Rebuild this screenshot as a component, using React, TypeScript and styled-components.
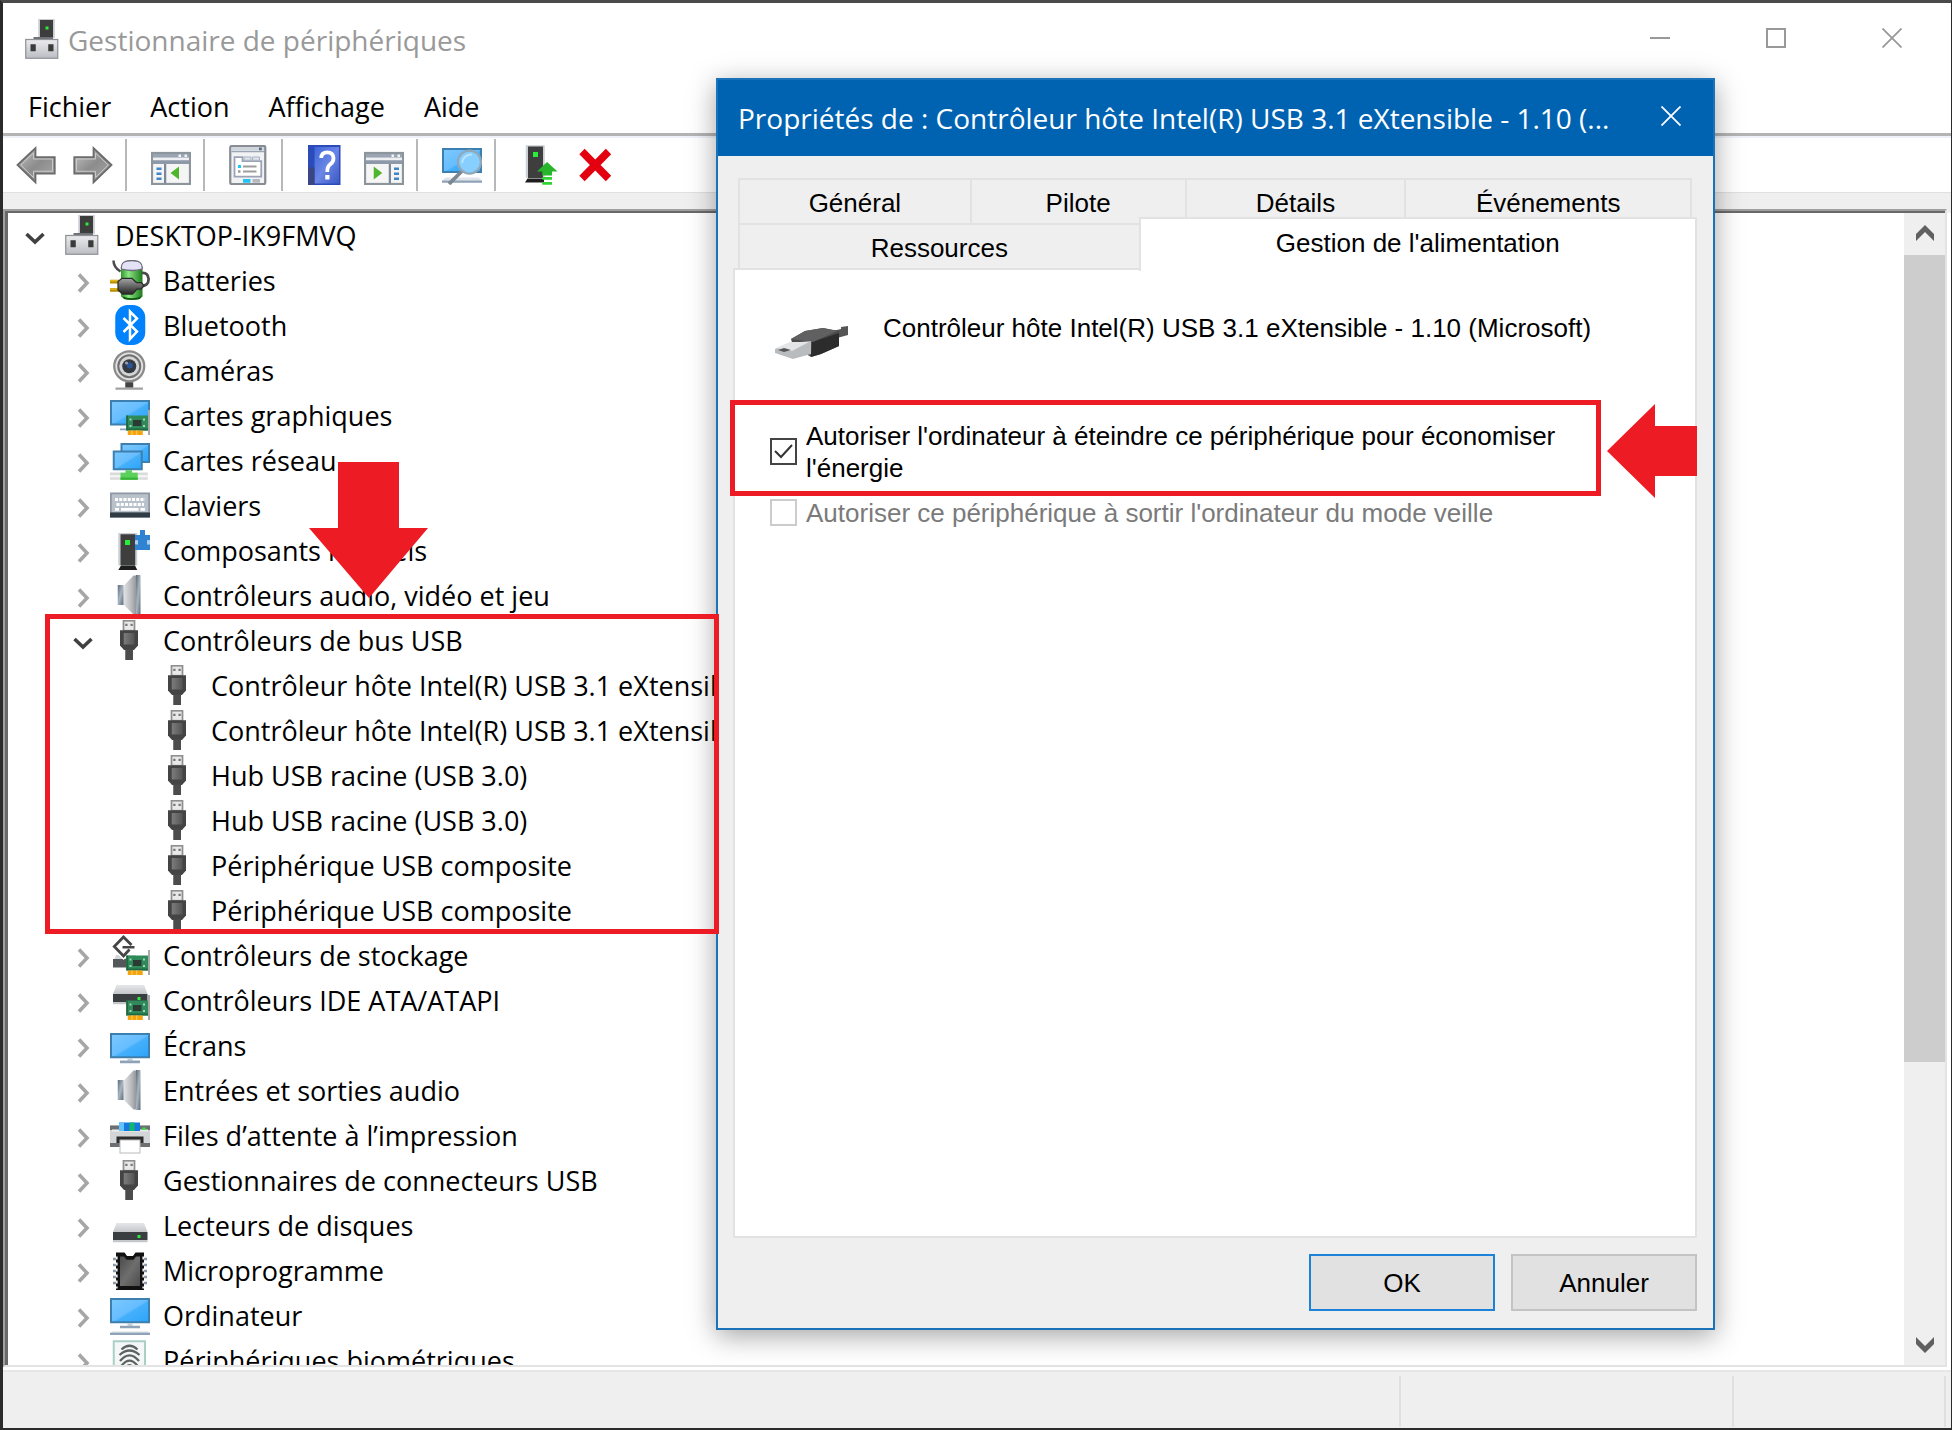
import React, { useState } from "react";
import styled, { createGlobalStyle } from "styled-components";

const uiFont = `"Open Sans", "Noto Sans", sans-serif`;
const dialogFont = `"Liberation Sans", Arial, sans-serif`;
const red = "#ed1c24";

const GlobalStyle = createGlobalStyle`
  *, *::before, *::after { box-sizing: border-box; }
  body { margin: 0; background: #2b2b2b; }
  button { border: 0; padding: 0; margin: 0; background: none; color: inherit; font: inherit; }
  ul { list-style: none; margin: 0; padding: 0; }
  svg { display: block; }
`;

/* ---------- icons (16 x 16 grid) ---------- */

const IconSvg = styled.svg`
  flex: none;
  width: 40px;
  height: 40px;
`;

const Defs = styled.svg`
  position: absolute;
  width: 0;
  height: 0;
`;

const Svg = ({ children }: { children: React.ReactNode }) => (
  <IconSvg viewBox="0 0 16 16" aria-hidden="true">
    {children}
  </IconSvg>
);

const Gradients = () => (
  <Defs aria-hidden="true">
    <defs>
      <linearGradient id="screen" x1="0" y1="0" x2="1" y2="1">
        <stop offset="0" stopColor="#7cc9ff" />
        <stop offset=".5" stopColor="#66bdff" />
        <stop offset=".55" stopColor="#45b0fb" />
        <stop offset="1" stopColor="#2ba4fa" />
      </linearGradient>
      <linearGradient id="metal" x1="0" y1="0" x2="0" y2="1">
        <stop offset="0" stopColor="#ececef" />
        <stop offset="1" stopColor="#bcbdc3" />
      </linearGradient>
      <linearGradient id="cone" x1="0" y1="0" x2="1" y2="0">
        <stop offset="0" stopColor="#e3e4e6" />
        <stop offset=".6" stopColor="#b4b6b9" />
        <stop offset="1" stopColor="#8a8c90" />
      </linearGradient>
      <linearGradient id="steel" x1="0" y1="0" x2="1" y2="1">
        <stop offset="0" stopColor="#5d6b7a" />
        <stop offset=".5" stopColor="#a9b5c1" />
        <stop offset="1" stopColor="#5c6a78" />
      </linearGradient>
      <linearGradient id="cell" x1="0" y1="0" x2="1" y2="0">
        <stop offset="0" stopColor="#2c9a2b" />
        <stop offset=".35" stopColor="#8be583" />
        <stop offset="1" stopColor="#1d7a1c" />
      </linearGradient>
      <linearGradient id="plug" x1="0" y1="0" x2="0" y2="1">
        <stop offset="0" stopColor="#a5a5a5" />
        <stop offset="1" stopColor="#262626" />
      </linearGradient>
      <linearGradient id="arrowFill" x1="0" y1="0" x2="1" y2="1">
        <stop offset="0" stopColor="#c4c4c4" />
        <stop offset=".5" stopColor="#8c8c8c" />
        <stop offset="1" stopColor="#a9a9a9" />
      </linearGradient>
      <linearGradient id="book" x1="0" y1="0" x2="1" y2="1">
        <stop offset="0" stopColor="#3f66d8" />
        <stop offset=".5" stopColor="#6a86e6" />
        <stop offset="1" stopColor="#3c58c4" />
      </linearGradient>
      <linearGradient id="chip" x1="0" y1="0" x2="1" y2="1">
        <stop offset="0" stopColor="#4a4a4a" />
        <stop offset=".5" stopColor="#6e6e6e" />
        <stop offset="1" stopColor="#4c4c4c" />
      </linearGradient>
      <linearGradient id="drive" x1="0" y1="0" x2="0" y2="1">
        <stop offset="0" stopColor="#e6e7ea" />
        <stop offset="1" stopColor="#c3c5c9" />
      </linearGradient>
      <linearGradient id="usbTop" x1="0" y1="0" x2="1" y2="0">
        <stop offset="0" stopColor="#7c7c7c" />
        <stop offset="1" stopColor="#555" />
      </linearGradient>
    </defs>
  </Defs>
);

const RootIcon = () => (
  <Svg>
    <rect x="6.5" y="0" width="6.6" height="7.6" fill="#c9ccd0" />
    <rect x="7.2" y=".4" width="5.2" height="7" fill="#3d3d3d" />
    <rect x="9.4" y="3" width="1.2" height="1.2" fill="#2eea3c" />
    <path d="M4.6 7.2h7.8v1H4.6z" fill="#6d7175" />
    <rect x="1.5" y="8.2" width="12.8" height="7.5" fill="url(#metal)" stroke="#8f9398" strokeWidth=".5" />
    <rect x="3.4" y="10.1" width="2.1" height="2.8" fill="#3a3a3a" />
    <rect x="10.5" y="10.1" width="2.1" height="2.8" fill="#3a3a3a" />
  </Svg>
);

const BatteryIcon = () => (
  <Svg>
    <path d="M4.4 3Q4.6 0 8.6 0T13 3v11.6Q12 16 8.7 16T4.4 14.6z" fill="url(#cell)" />
    <path d="M4.6 3.6Q4 .2 8.7.2T12.8 3.6Q9 4.8 4.6 3.6z" fill="#e4e2f6" stroke="#6b6a7c" strokeWidth=".5" />
    <path d="M5 14.5q3.6 1.6 7.6 0L12 15.6q-3.4.8-6.4 0z" fill="#0f5a10" />
    <path d="M1.4.2Q1.4 3 4.2 4.6" fill="none" stroke="#4b4b4b" strokeWidth="1" />
    <path d="M11.8 10.4Q15.7 10.6 15.4 7.4 15.1 5 12.8 5.2" fill="none" stroke="#4b4b4b" strokeWidth="1.1" />
    <path d="M0 8.6h3.6M0 11.9h3.6" stroke="#b98c00" strokeWidth="1.5" />
    <path d="M0 8.3h3.6M0 11.6h3.6" stroke="#e3b81c" strokeWidth=".6" />
    <path d="M3.2 8.6L4.8 7.3h4L10.6 9h2l1 1.3-1.2 1.3h-1.6L9 13.6H5L3.2 12z" fill="url(#plug)" stroke="#2b2b2b" strokeWidth=".5" />
  </Svg>
);

const BluetoothIcon = () => (
  <Svg>
    <rect x="2.1" y="0" width="12" height="16" rx="5" fill="#0082fc" />
    <path d="M5.4 5.2l5.4 5.4-2.8 3V2.6l2.8 2.8-5.4 5.4" fill="none" stroke="#fff" strokeWidth="1" />
  </Svg>
);

const CameraIcon = () => (
  <Svg>
    <circle cx="7.7" cy="6.5" r="6" fill="#e2e2e2" stroke="#8a8a8a" strokeWidth=".9" />
    <circle cx="7.7" cy="6.5" r="4.4" fill="#d3d4d6" stroke="#6f6f6f" strokeWidth=".8" />
    <circle cx="7.7" cy="6.5" r="2.8" fill="#343a40" />
    <circle cx="7.9" cy="6.2" r="1.2" fill="#28549a" />
    <circle cx="6.6" cy="5.2" r=".6" fill="#9ba6b4" />
    <rect x="6.1" y="12.9" width="3.2" height="2.2" fill="#444" />
    <rect x="2.2" y="15" width="11" height=".9" fill="#a2a2a2" />
  </Svg>
);

const Screen = ({ x, y, w, h }: { x: number; y: number; w: number; h: number }) => (
  <rect x={x + 0.4} y={y + 0.4} width={w - 0.8} height={h - 0.8} fill="url(#screen)" stroke="#3d7fae" strokeWidth=".8" />
);

const Card = () => (
  <g>
    <rect x="15.2" y="6" width=".8" height="10" fill="#a9a9a9" />
    <rect x="6.5" y="8.2" width="8.7" height="6" fill="#2f8a5a" />
    <path d="M6.5 13.4h8.7v.8H6.5zM6.5 8.2h.7v6h-.7z" fill="#1f6a43" />
    <rect x="9.2" y="10" width="3.4" height="2.4" fill="#2b3a33" />
    <path d="M7.8 9.4h.8v.8h-.8zM13.2 9.4h.8v.8h-.8zM7.8 12h.8v.8h-.8zM13.2 12h.8v.8h-.8z" fill="#a4d3b9" />
    <rect x="7.1" y="14.2" width="6" height="1.8" fill="#f5a30f" />
    <path d="M8.8 14.2v1.8M10.7 14.2v1.8" stroke="#ffd15a" strokeWidth=".4" />
  </g>
);

const GraphicsIcon = () => (
  <Svg>
    <Screen x={0} y={2} w={16} h={10.2} />
    <rect x="4" y="13.4" width="3" height=".7" fill="#8ea3b8" />
    <Card />
  </Svg>
);

const NetworkIcon = () => (
  <Svg>
    <Screen x={4.2} y={1.2} w={11.8} h={8} />
    <Screen x={1.1} y={4.2} w={12} h={7.9} />
    <rect x="0" y="13" width="15.1" height="2.9" fill="#d9dbdb" />
    <path d="M0 14h15.1v1H0z" fill="#f2f3f3" />
    <path d="M6.2 12.1h2.6v1h2.3v2.8H4.2v-2.8h2z" fill="#5bd05a" />
    <path d="M4.2 15h6.9v.9H4.2z" fill="#36b436" />
  </Svg>
);

const KeyboardIcon = () => (
  <Svg>
    <rect x="0" y="3" width="16" height="10" fill="#8d98a3" />
    <rect x=".7" y="3.7" width="14.6" height="7.2" fill="#b9c2cb" />
    <path d="M2 5.8h12M2.6 7.8h11" stroke="#fff" strokeWidth="1.2" strokeDasharray="1.2 .5" />
    <path d="M2 9.7h1.6M4.4 9.7h7M12.2 9.7h1.8" stroke="#fff" strokeWidth="1.1" />
    <rect x="0" y="11" width="16" height="2" fill="#2f3b45" />
  </Svg>
);

const ComponentIcon = () => (
  <Svg>
    <rect x="3.3" y="1.2" width="7.6" height="13" fill="#ccd0d4" />
    <rect x="4.2" y="1.7" width="5.9" height="12.4" fill="#3e3e3e" />
    <rect x="6" y="4" width="2" height="2" fill="#28ee3a" />
    <path d="M4.4 14.2h5.6l.9 1.8H3.3z" fill="#1e1e1e" />
    <path d="M12 0h2v2h2v2.200h-1.200v1.500H16V8h-6V5.700h1.200V4.200H10V2h2z" fill="#2f83d0" />
    <path d="M10 4.200h1.200v1.500H10zM14.800 4.200H16v1.500h-1.200z" fill="#a9d0f2" />
  </Svg>
);

const SpeakerIcon = () => (
  <Svg>
    <path d="M5.4 4.4L9.4.2h1.6v15.6H9.4L5.4 11.800z" fill="url(#cone)" />
    <rect x="3.1" y="4" width="2.3" height="8" fill="url(#steel)" />
    <rect x="10.4" y="0" width="1.8" height="16" fill="url(#steel)" />
  </Svg>
);

const UsbIcon = () => (
  <Svg>
    <rect x="5.4" y=".3" width="4.4" height="4" fill="#e9e9e9" stroke="#8f8f8f" strokeWidth=".7" />
    <path d="M6.1 1.500h.9v.9h-.9zM8.200 1.500h.9v.9h-.9z" fill="#777" />
    <path d="M4 4.100h7.200v6.100L9.600 12H5.600L4 10.200z" fill="#444" />
    <path d="M5.500 5.200h4.300v4.600H5.500z" fill="url(#usbTop)" />
    <rect x="6.100" y="11.800" width="3.100" height="4.200" fill="#4c4c4c" />
  </Svg>
);

const DriveShape = ({ y }: { y: number }) => (
  <g transform={`translate(0 ${y})`}>
    <path d="M2.6 0h11L15 3.6H1.2z" fill="url(#drive)" />
    <rect x="1.2" y="3.6" width="13.8" height="3.3" fill="#3b3e40" />
    <rect x="1.2" y="6.9" width="13.8" height=".8" fill="#c4c7ca" />
    <rect x="11" y="4.8" width="1.2" height="1.2" fill="#2eea3c" />
  </g>
);

const StorageIcon = () => (
  <Svg>
    <path d="M2.400 8h8v3H1.200z" fill="#d3d5d8" />
    <rect x="1.200" y="9.600" width="6" height="3.400" fill="#55585b" />
    <path d="M8.600 4L5.400.8 1.700 4.600l3.700 3.800 2.400-2.600" fill="none" stroke="#fff" strokeWidth="2.200" />
    <path d="M8.600 4L5.400.8 1.700 4.600l3.700 3.800 2.400-2.600" fill="none" stroke="#454545" strokeWidth="1.100" />
    <path d="M5 4.900h4.800" stroke="#454545" strokeWidth="1" />
    <Card />
  </Svg>
);

const IdeIcon = () => (
  <Svg>
    <DriveShape y={2} />
    <Card />
  </Svg>
);

const DisplayIcon = () => (
  <Svg>
    <Screen x={0} y={3.2} w={16} h={10.1} />
    <rect x="7" y="13.3" width="2" height="1" fill="#c3ccd6" />
    <rect x="4" y="14.2" width="8" height="1.1" fill="#8ea3b8" />
  </Svg>
);

const PrinterIcon = () => (
  <Svg>
    <path d="M0 4.200h16v8.600H0z" fill="#d4d5d7" />
    <path d="M0 4.200h16V6H0zM0 11.200h16v1.600H0z" fill="#6d7073" />
    <path d="M.8 5.800h14.400v.8H.8z" fill="#eceded" />
    <rect x="3.600" y="3" width="8.400" height="3.400" fill="#1579e0" />
    <rect x="3.600" y="3" width="2" height="3.400" fill="#62c3ff" />
    <rect x="7.800" y="3" width="2" height="3.400" fill="#12b76a" />
    <rect x="13" y="5" width="1.200" height="1" fill="#2eea3c" />
    <rect x="2.600" y="8.600" width="10.800" height="2.600" fill="#2d2d2d" />
    <rect x="4" y="10" width="8" height="5.200" fill="#fff" stroke="#bbb" strokeWidth=".4" />
  </Svg>
);

const DiskIcon = () => (
  <Svg>
    <DriveShape y={7.2} />
  </Svg>
);

const ChipIcon = () => (
  <Svg>
    <path d="M1.2 3.6h13.6M1.2 6h13.6M1.2 8.4h13.6M1.2 10.8h13.6M1.2 13.2h13.6" stroke="#8c98aa" strokeWidth="1" />
    <path d="M2.4 1h3.4l1 1.4h2.4l1-1.4h3.4v15H2.4z" fill="#111" />
    <path d="M4 2.6h1.6l1 1.3h2.8l1-1.3H12v11.8H4z" fill="url(#chip)" />
    <path d="M2.7 2.6v12.8M13.3 2.6v12.8" stroke="#e8edf4" strokeWidth=".7" strokeDasharray="1.2 1.2" />
  </Svg>
);

const DesktopIcon = () => (
  <Svg>
    <Screen x={0} y={1.2} w={16} h={10.1} />
    <rect x="7" y="11.3" width="2" height="1" fill="#c3ccd6" />
    <rect x="4" y="12.3" width="8" height="1" fill="#8ea3b8" />
    <path d="M1 14.6h14l1 .6H0z" fill="#d5dbe2" />
    <rect x="0" y="15.1" width="16" height=".9" fill="#8ea3b8" />
  </Svg>
);

const FingerprintIcon = () => (
  <Svg>
    <rect x="1.5" y=".5" width="12.5" height="15.5" fill="#f4f7f6" stroke="#a9cfc6" strokeWidth=".8" />
    <path
      d="M4.6 3.800Q7.800.8 11 3.800M3.800 6Q7.800 2.400 11.800 6M4 8.400Q7.800 3.800 11.600 8.400M4.200 10.800Q7.800 5.600 11.400 10.800M5.600 12.400Q7.800 7.600 10 12.400"
      fill="none"
      stroke="#5c6362"
      strokeWidth=".9"
    />
  </Svg>
);

const BackIcon = () => (
  <Svg>
    <path d="M.6 8L7.8 1.2v3.6h7.7v6.6H7.8V15z" fill="url(#arrowFill)" stroke="#6b6b6b" strokeWidth=".7" />
    <path d="M1.9 8l5.1-4.8v2.4h7.6v4.9H7V13z" fill="none" stroke="#c9c9c9" strokeWidth=".4" />
  </Svg>
);

const ForwardIcon = () => (
  <Svg>
    <path d="M15.4 8L8.2 1.2v3.6H.5v6.6h7.7V15z" fill="url(#arrowFill)" stroke="#6b6b6b" strokeWidth=".7" />
    <path d="M14.1 8L9 3.2v2.4H1.4v4.9H9V13z" fill="none" stroke="#c9c9c9" strokeWidth=".4" />
  </Svg>
);

const PaneIcon = ({ right = false }: { right?: boolean }) => (
  <Svg>
    <rect x=".4" y="3.2" width="15.2" height="12.4" fill="#f5f5f5" stroke="#8c949c" strokeWidth=".9" />
    <rect x=".8" y="3.6" width="14.4" height="1.5" fill="#9aa4b2" />
    <path d="M11 3.8h1v1h-1zM13.4 3.8h1v1h-1z" fill="#f1f4f8" />
    <rect x=".8" y="5.1" width="14.4" height="1" fill="#eef0f4" />
    <rect x=".8" y="6.1" width="14.4" height="1.5" fill="#8d98a8" />
    {right ? (
      <g>
        <rect x="9.9" y="7.6" width=".9" height="7.7" fill="#7d8899" />
        <path d="M12 9.5h2M12 11.5h2M12 13.5h2" stroke="#3f86c8" strokeWidth="1" />
        <path d="M3.9 8.6v5.2L7.3 11.2z" fill="#4fb52c" />
      </g>
    ) : (
      <g>
        <rect x="5.2" y="7.6" width=".9" height="7.7" fill="#7d8899" />
        <path d="M2.2 9.5h2M2.2 11.5h2M2.2 13.5h2" stroke="#3f86c8" strokeWidth="1" />
        <path d="M11.2 8.6v5.2L7.8 11.2z" fill="#4fb52c" />
      </g>
    )}
  </Svg>
);

const PropertiesIcon = () => (
  <Svg>
    <rect x=".5" y=".4" width="14" height="15.2" rx=".6" fill="#f0f2f4" stroke="#878d93" strokeWidth=".9" />
    <rect x="1" y=".9" width="13" height="1.4" fill="#cfd5dc" />
    <rect x="12" y="1" width="1.1" height="1.1" fill="#5a6a86" />
    <rect x="1" y="2.4" width="13" height=".5" fill="#9aa5b3" />
    <path d="M2.2 4.8h3.2v1.6h7.5v6.2H2.2z" fill="#fff" stroke="#9aa2b5" strokeWidth=".7" />
    <path d="M6 4.8h2.8v1.3H6zM9.4 4.8h2.8v1.3H9.4z" fill="#dfe5ec" stroke="#a9b2c0" strokeWidth=".4" />
    <rect x="3.6" y="8" width="1.2" height="1.2" fill="#17cbf5" />
    <path d="M5.6 8.6h5.4M5.6 10.6h5.4" stroke="#9d9d9d" strokeWidth=".8" />
    <rect x="3.6" y="10.1" width="1" height="1" fill="#999" />
    <rect x="5.6" y="13.6" width="3" height="1.5" fill="#1fc4f5" />
    <rect x="9.4" y="13.6" width="3" height="1.5" fill="#b5b9bd" />
  </Svg>
);

const HelpIcon = () => (
  <Svg>
    <g transform="translate(-1.2 0)">
      <rect x="1.6" y="0" width="13" height="16" fill="#2b4bb8" />
      <rect x="4.2" y=".8" width="9.8" height="14.6" fill="url(#book)" />
      <rect x="1.6" y="9" width="2.6" height="7" fill="#3a4684" />
      <path d="M6.9 5.2Q6.9 2.900 9.300 2.900T11.800 5.300Q11.800 6.800 10.400 7.800 9.300 8.600 9.300 10.800" fill="none" stroke="#fff" strokeWidth="1.500" />
      <rect x="8.500" y="12" width="1.700" height="1.800" fill="#fff" />
    </g>
  </Svg>
);

const ScanIcon = () => (
  <Svg>
    <Screen x={0} y={1.2} w={16} h={10} />
    <path d="M1.4 13h13.2l1.4 1.3H0z" fill="#dfe4ea" />
    <rect x="0" y="14.2" width="16" height=".9" fill="#8ea3b8" />
    <path d="M8 10.4L2.8 15.6" stroke="#7b8791" strokeWidth="1.5" />
    <circle cx="11" cy="6.8" r="4.6" fill="#86cfff" stroke="#8fa9bb" strokeWidth=".9" />
    <path d="M8 7.2Q8.6 3.8 12 3.8" fill="none" stroke="#b8e3ff" strokeWidth=".8" />
  </Svg>
);

const UpdateIcon = () => (
  <Svg>
    <rect x="2.3" y=".1" width="7.6" height="13" fill="#ccd0d4" />
    <rect x="3.2" y=".6" width="6" height="12.6" fill="#3e3e3e" />
    <rect x="5.2" y="2.8" width="2" height="2" fill="#28ee3a" />
    <path d="M3 13.4h6.600v1.600H2z" fill="#1e1e1e" />
    <path d="M10.800 6.800l4.200 3.800h-2.200v1.600H8.900v-1.600H6.800z" fill="#27b52b" />
    <path d="M8.900 13.300h3.900M8.900 15.300h3.900" stroke="#2ed334" strokeWidth="1.100" />
  </Svg>
);

const RemoveIcon = () => (
  <Svg>
    <path d="M2 2.6l10.600 10.800M12.600 2.600L2 13.400" stroke="#e3000f" strokeWidth="3" />
  </Svg>
);

const UsbPlugPicture = () => (
  <svg width="74" height="34" viewBox="0 0 74 34" aria-hidden="true">
    <path d="M58 5L66 3V1L73 0V9L62 12z" fill="#555" />
    <path d="M16 13L30 5 48 2 64 5V20L46 28 36 31 18 20z" fill="#4c4c4c" />
    <path d="M37 16L64 7V20L46 28 36 31z" fill="#2c2c2c" />
    <path d="M16 13L30 5 48 2 62 5 38 16z" fill="#606060" />
    <path d="M0 23L14 17 36 15V28L18 33 0 27z" fill="#b9bcbf" />
    <path d="M1 22L15 16 34 16 17 25z" fill="#e4e5e7" />
    <path d="M3 24L9 22 16 24 9 26z" fill="#555" />
  </svg>
);

const Chevron = ({ open = false }: { open?: boolean }) => (
  <svg width="20" height="20" viewBox="0 0 20 20" aria-hidden="true">
    {open ? (
      <path d="M1.5 6L10 14l8.5-8" fill="none" stroke="#404040" strokeWidth="3.6" />
    ) : (
      <path d="M6 1.5L14 10l-8 8.5" fill="none" stroke="#a6a6a6" strokeWidth="3.6" />
    )}
  </svg>
);

/* ---------- main window ---------- */

const Frame = styled.main`
  display: flex;
  flex-direction: column;
  height: 100vh;
  min-width: 0;
  position: relative;
  overflow: hidden;
  border: solid #2b2b2b;
  border-width: 3px 1px 2px 3px;
  border-top-color: #4a4a4a;
  background: #fff;
  font-family: ${uiFont};
  font-size: 27px;
  line-height: 40px;
  color: #000;
`;

const TitleBar = styled.header`
  display: flex;
  align-items: center;
  height: 72px;
  padding-left: 19px;
  flex: none;
`;

const Title = styled.h1`
  flex: 1;
  margin: 0;
  padding: 2px 0 0 6px;
  font-size: 28px;
  font-weight: 400;
  color: #999;
`;

const CaptionButton = styled.button`
  display: flex;
  align-items: center;
  justify-content: center;
  width: 116px;
  height: 72px;
  padding: 0 2px 2px 0;
  color: #999;
`;

const MenuBar = styled.nav`
  display: flex;
  align-items: center;
  gap: 39px;
  height: 61px;
  padding: 6px 0 0 25px;
  flex: none;
  border-bottom: 3px solid #b4b4b4;
`;

const Toolbar = styled.div`
  display: flex;
  align-items: center;
  height: 56px;
  padding-left: 13px;
  flex: none;
  border-top: 2px solid #eef1f8;
`;

const Group = styled.div`
  display: flex;
  align-items: center;
  gap: 17px;
  height: 52px;
  & + & {
    margin-left: 12px;
    padding-left: 24px;
    border-left: 2px solid #b8b8b8;
  }
`;

const Body = styled.div`
  display: flex;
  flex: 1;
  flex-direction: column;
  min-height: 0;
  padding: 16px 4px 3px 0;
  background: linear-gradient(#efefef 20px, #fff 20px);
  border-top: 1px solid #e0e0e0;
`;

const TreePane = styled.div`
  display: flex;
  flex: 1;
  min-height: 0;
  border: 2px solid #a0a0a0;
  border-right-color: #e3e3e3;
  border-bottom-color: #e3e3e3;
`;

const TreeInner = styled.div`
  display: flex;
  flex: 1;
  min-width: 0;
  border: solid #696969;
  border-width: 2px 0 0 3px;
`;

const TreeScroll = styled.div`
  flex: 1;
  min-width: 0;
  overflow: hidden;
  background: #fff;
`;

const Branch = styled.ul`
  & & {
    padding-left: 48px;
  }
`;

const Row = styled.div`
  display: flex;
  align-items: flex-start;
  height: 45px;
  padding-top: 2px;
`;

const Toggle = styled.button`
  display: flex;
  align-items: center;
  justify-content: center;
  flex: none;
  width: 54px;
  height: 46px;
`;

const Leaf = styled.span`
  flex: none;
  width: 54px;
`;

const Label = styled.span`
  padding: 1px 0 0 13px;
  white-space: nowrap;
`;

const ScrollBar = styled.div`
  display: flex;
  flex-direction: column;
  width: 41px;
  background: #efefef;
`;

const ScrollButton = styled.button`
  display: flex;
  align-items: center;
  justify-content: center;
  height: 42px;
  flex: none;
`;

const Track = styled.div`
  flex: 1;
`;

const Thumb = styled.div`
  height: 75.6%;
  background: #cdcdcd;
`;

const StatusBar = styled.footer`
  display: flex;
  height: 58px;
  flex: none;
  padding: 4px 5px 1px 0;
  border-top: 2px solid #e6e6e6;
  background: #efefef;
`;

const StatusCell = styled.div<{ $grow?: boolean; $width?: number }>`
  flex: ${(p) => (p.$grow ? "1" : `0 0 ${p.$width}px`)};
  border-right: 2px solid #e0e0e0;
`;

/* ---------- properties dialog ---------- */

const Dialog = styled.section`
  position: absolute;
  left: 713px;
  top: 75px;
  width: 999px;
  display: flex;
  flex-direction: column;
  height: 1252px;
  border: 2px solid #1a72b8;
  background: #efefef;
  box-shadow: 0 6px 26px rgba(0, 0, 0, 0.36);
  font-family: ${dialogFont};
  font-size: 26px;
  line-height: 32px;
`;

const DialogTitleBar = styled.header`
  display: flex;
  align-items: center;
  height: 76px;
  flex: none;
  padding-left: 20px;
  background: #0063b1;
  color: #fff;
`;

const DialogTitle = styled.h2`
  flex: 1;
  margin: 0;
  font-family: ${uiFont};
  font-size: 28px;
  line-height: 40px;
  font-weight: 400;
  white-space: nowrap;
`;

const DialogClose = styled.button`
  display: flex;
  align-items: center;
  justify-content: center;
  width: 84px;
  height: 76px;
  padding-bottom: 5px;
`;

const TabArea = styled.div`
  display: flex;
  flex-direction: column;
  flex: 1;
  padding: 22px 16px 0 15px;
`;

const TabRow = styled.div<{ $columns: string; $last?: boolean }>`
  display: grid;
  grid-template-columns: ${(p) => p.$columns};
  height: 45px;
  padding: ${(p) => (p.$last ? "0 0 0 5px" : "0 5px")};
`;

const Tab = styled.button`
  padding-top: 3px;
  border: 2px solid #e2e2e2;
  border-width: 2px 0 0 2px;
  &:last-child {
    border-right-width: 2px;
  }
  &[aria-selected="true"] {
    position: relative;
    margin: -6px 0 -3px;
    padding: 0 0 5px;
    background: #fff;
  }
`;

const Panel = styled.div`
  flex: 1;
  border: 2px solid #e2e2e2;
  background: #fff;
`;

const DeviceHeader = styled.div`
  display: flex;
  align-items: flex-start;
  gap: 34px;
  padding: 42px 0 0 40px;
  height: 150px;
  svg {
    margin-top: 14px;
  }
`;

const Options = styled.div`
  display: flex;
  flex-direction: column;
  gap: 13px;
  padding-left: 35px;
`;

const Option = styled.label<{ $disabled?: boolean }>`
  display: flex;
  align-items: center;
  gap: 9px;
  max-width: 805px;
  color: ${(p) => (p.$disabled ? "#7a7a7a" : "#000")};
`;

const CheckBox = styled.input`
  appearance: none;
  flex: none;
  width: 27px;
  height: 27px;
  margin: 0 0 2px;
  border: 2px solid #444;
  background: #fff;
  &:checked {
    background: url("data:image/svg+xml,%3Csvg xmlns='http://www.w3.org/2000/svg' viewBox='0 0 23 23'%3E%3Cpath d='M3 11l6 6L20 5' fill='none' stroke='%23333' stroke-width='2'/%3E%3C/svg%3E");
  }
  &:disabled {
    border-color: #ccc;
  }
`;

const Actions = styled.footer`
  display: flex;
  justify-content: flex-end;
  gap: 16px;
  padding: 16px 16px 17px;
`;

const ActionButton = styled.button<{ $primary?: boolean }>`
  width: 186px;
  height: 57px;
  border: 2px solid ${(p) => (p.$primary ? "#1c83d8" : "#c3c3c3")};
  background: #e1e1e1;
`;

/* ---------- annotations ---------- */

const Highlight = styled.div<{ $x: number; $y: number; $w: number; $h: number }>`
  position: absolute;
  left: ${(p) => p.$x}px;
  top: ${(p) => p.$y}px;
  width: ${(p) => p.$w}px;
  height: ${(p) => p.$h}px;
  border: 5px solid ${red};
  pointer-events: none;
`;

const Pointer = styled.svg<{ $x: number; $y: number }>`
  position: absolute;
  left: ${(p) => p.$x}px;
  top: ${(p) => p.$y}px;
  fill: ${red};
  pointer-events: none;
`;

type Device = { name: string; icon: React.ComponentType; children?: string[] };

const devices: Device[] = [
  { name: "Batteries", icon: BatteryIcon },
  { name: "Bluetooth", icon: BluetoothIcon },
  { name: "Caméras", icon: CameraIcon },
  { name: "Cartes graphiques", icon: GraphicsIcon },
  { name: "Cartes réseau", icon: NetworkIcon },
  { name: "Claviers", icon: KeyboardIcon },
  { name: "Composants logiciels", icon: ComponentIcon },
  { name: "Contrôleurs audio, vidéo et jeu", icon: SpeakerIcon },
  {
    name: "Contrôleurs de bus USB",
    icon: UsbIcon,
    children: [
      "Contrôleur hôte Intel(R) USB 3.1 eXtensible",
      "Contrôleur hôte Intel(R) USB 3.1 eXtensible",
      "Hub USB racine (USB 3.0)",
      "Hub USB racine (USB 3.0)",
      "Périphérique USB composite",
      "Périphérique USB composite",
    ],
  },
  { name: "Contrôleurs de stockage", icon: StorageIcon },
  { name: "Contrôleurs IDE ATA/ATAPI", icon: IdeIcon },
  { name: "Écrans", icon: DisplayIcon },
  { name: "Entrées et sorties audio", icon: SpeakerIcon },
  { name: "Files d’attente à l’impression", icon: PrinterIcon },
  { name: "Gestionnaires de connecteurs USB", icon: UsbIcon },
  { name: "Lecteurs de disques", icon: DiskIcon },
  { name: "Microprogramme", icon: ChipIcon },
  { name: "Ordinateur", icon: DesktopIcon },
  { name: "Périphériques biométriques", icon: FingerprintIcon },
];

const DeviceNode = ({ device }: { device: Device }) => {
  const [open, setOpen] = useState(Boolean(device.children));
  const Icon = device.icon;
  return (
    <li>
      <Row>
        <Toggle aria-label={device.name} aria-expanded={open} onClick={() => setOpen(!open)}>
          <Chevron open={open} />
        </Toggle>
        <Icon />
        <Label>{device.name}</Label>
      </Row>
      {open && device.children && (
        <Branch>
          {device.children.map((child, i) => (
            <li key={i}>
              <Row>
                <Leaf />
                <UsbIcon />
                <Label>{child}</Label>
              </Row>
            </li>
          ))}
        </Branch>
      )}
    </li>
  );
};

const CrossGlyph = () => (
  <svg width="20" height="20" viewBox="0 0 20 20" aria-hidden="true">
    <path d="M.5.5l19 19M19.5.5l-19 19" stroke="currentColor" strokeWidth="1.8" fill="none" />
  </svg>
);

export default function App() {
  const [allowOff, setAllowOff] = useState(true);
  return (
    <>
      <GlobalStyle />
      <Gradients />
      <Frame>
        <TitleBar>
          <RootIcon />
          <Title>Gestionnaire de périphériques</Title>
          <CaptionButton aria-label="Réduire">
            <svg width="20" height="20" viewBox="0 0 20 20">
              <path d="M0 10h20" stroke="currentColor" strokeWidth="2" />
            </svg>
          </CaptionButton>
          <CaptionButton aria-label="Agrandir">
            <svg width="20" height="20" viewBox="0 0 20 20">
              <rect x="1" y="1" width="18" height="18" fill="none" stroke="currentColor" strokeWidth="2" />
            </svg>
          </CaptionButton>
          <CaptionButton aria-label="Fermer">
            <CrossGlyph />
          </CaptionButton>
        </TitleBar>
        <MenuBar>
          <button>Fichier</button>
          <button>Action</button>
          <button>Affichage</button>
          <button>Aide</button>
        </MenuBar>
        <Toolbar>
          <Group>
            <button aria-label="Précédent"><BackIcon /></button>
            <button aria-label="Suivant"><ForwardIcon /></button>
          </Group>
          <Group>
            <button aria-label="Arborescence"><PaneIcon /></button>
          </Group>
          <Group>
            <button aria-label="Propriétés"><PropertiesIcon /></button>
          </Group>
          <Group>
            <button aria-label="Aide"><HelpIcon /></button>
            <button aria-label="Volet"><PaneIcon right /></button>
          </Group>
          <Group>
            <button aria-label="Analyser"><ScanIcon /></button>
          </Group>
          <Group>
            <button aria-label="Mettre à jour"><UpdateIcon /></button>
            <button aria-label="Désinstaller"><RemoveIcon /></button>
          </Group>
        </Toolbar>
        <Body>
          <TreePane>
            <TreeInner>
              <TreeScroll>
                <Branch>
                  <li>
                    <Row>
                      <Toggle aria-label="DESKTOP-IK9FMVQ" aria-expanded>
                        <Chevron open />
                      </Toggle>
                      <RootIcon />
                      <Label>DESKTOP-IK9FMVQ</Label>
                    </Row>
                    <Branch>
                      {devices.map((d) => (
                        <DeviceNode key={d.name} device={d} />
                      ))}
                    </Branch>
                  </li>
                </Branch>
              </TreeScroll>
              <ScrollBar>
                <ScrollButton aria-label="Défiler vers le haut">
                  <svg width="20" height="20" viewBox="0 0 20 20">
                    <path d="M10 1l9 9v7l-9-9-9 9v-7z" fill="#606060" />
                  </svg>
                </ScrollButton>
                <Track>
                  <Thumb />
                </Track>
                <ScrollButton aria-label="Défiler vers le bas">
                  <svg width="20" height="20" viewBox="0 0 20 20">
                    <path d="M10 19L1 10V3l9 9 9-9v7z" fill="#606060" />
                  </svg>
                </ScrollButton>
              </ScrollBar>
            </TreeInner>
          </TreePane>
        </Body>
        <StatusBar>
          <StatusCell $grow />
          <StatusCell $width={333} />
          <StatusCell $width={212} />
        </StatusBar>

        <Dialog role="dialog" aria-labelledby="dialog-title">
          <DialogTitleBar>
            <DialogTitle id="dialog-title">
              Propriétés de : Contrôleur hôte Intel(R) USB 3.1 eXtensible - 1.10 (...
            </DialogTitle>
            <DialogClose aria-label="Fermer">
              <CrossGlyph />
            </DialogClose>
          </DialogTitleBar>
          <TabArea>
            <TabRow $columns="232fr 215fr 220fr 288fr">
              <Tab role="tab">Général</Tab>
              <Tab role="tab">Pilote</Tab>
              <Tab role="tab">Détails</Tab>
              <Tab role="tab">Événements</Tab>
            </TabRow>
            <TabRow $columns="401fr 559fr" $last>
              <Tab role="tab">Ressources</Tab>
              <Tab role="tab" aria-selected="true">Gestion de l'alimentation</Tab>
            </TabRow>
            <Panel role="tabpanel">
              <DeviceHeader>
                <UsbPlugPicture />
                <span>Contrôleur hôte Intel(R) USB 3.1 eXtensible - 1.10 (Microsoft)</span>
              </DeviceHeader>
              <Options>
                <Option>
                  <CheckBox type="checkbox" checked={allowOff} onChange={(e) => setAllowOff(e.target.checked)} />
                  <span>Autoriser l'ordinateur à éteindre ce périphérique pour économiser l'énergie</span>
                </Option>
                <Option $disabled>
                  <CheckBox type="checkbox" disabled />
                  <span>Autoriser ce périphérique à sortir l'ordinateur du mode veille</span>
                </Option>
              </Options>
            </Panel>
          </TabArea>
          <Actions>
            <ActionButton $primary>OK</ActionButton>
            <ActionButton>Annuler</ActionButton>
          </Actions>
        </Dialog>

        <Highlight $x={42} $y={611} $w={674} $h={320} />
        <Highlight $x={727} $y={397} $w={871} $h={96} />
        <Pointer $x={306} $y={459} width="119" height="136" viewBox="0 0 119 136">
          <path d="M29 0h61v66h29L60 136 0 66h29z" />
        </Pointer>
        <Pointer $x={1604} $y={401} width="90" height="94" viewBox="0 0 90 94">
          <path d="M0 47L48 0v22h42v50H48v22z" />
        </Pointer>
      </Frame>
    </>
  );
}
